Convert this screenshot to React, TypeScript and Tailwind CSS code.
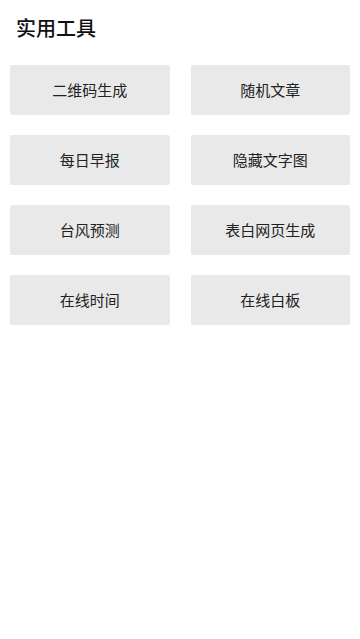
import React from "react";

const tools = [
  "二维码生成",
  "随机文章",
  "每日早报",
  "隐藏文字图",
  "台风预测",
  "表白网页生成",
  "在线时间",
  "在线白板",
];

const App = () => {
  return (
    <div
      className="min-h-[639px] w-[360px] bg-white"
      style={{ fontFamily: '"Noto Sans CJK SC", "Noto Sans", sans-serif' }}
    >
      <h1 className="pl-4 pt-[14px] text-[20px] leading-[28px] font-medium text-[#111]">
        实用工具
      </h1>
      <div className="mt-[23px] grid grid-cols-2 gap-x-[21px] gap-y-5 px-[10px]">
        {tools.map((name) => (
          <button
            key={name}
            className="flex h-[50px] items-center justify-center rounded-[2px] bg-[#e9e9e9] text-[15px] text-[#222]"
          >
            {name}
          </button>
        ))}
      </div>
    </div>
  );
};

export default App;
